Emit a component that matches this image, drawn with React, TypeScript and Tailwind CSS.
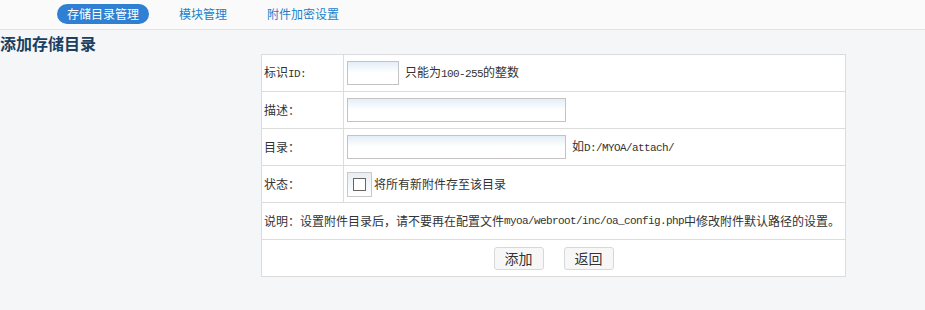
import React from 'react';

const CJK = '"Noto Sans CJK SC", "Noto Sans", sans-serif';

const Mono: React.FC<{ children: React.ReactNode }> = ({ children }) => (
    <span className="text-[11px] tracking-[-0.6px]" style={{ fontFamily: '"Liberation Mono", monospace' }}>{children}</span>
);

const TextInput: React.FC<{ width: string }> = ({ width }) => (
    <input
        type="text"
        className={`${width} h-[24px] border border-[#c3c3c3] bg-gradient-to-b from-[#e4eef7] via-white to-white text-[12px] px-1 outline-none`}
    />
);

const Row: React.FC<{ label: string | React.ReactNode; children: React.ReactNode }> = ({ label, children }) => (
    <div className="flex h-[37px] border-b border-[#dcdcdc]">
        <div className="w-[82px] border-r border-[#dcdcdc] flex items-center pl-[2px] text-[12px] text-[#333]">{label}</div>
        <div className="flex-1 flex items-center pl-[3px] text-[12px] text-[#333]">{children}</div>
    </div>
);

const App: React.FC = () => {
    const tabs = ['存储目录管理', '模块管理', '附件加密设置'];

    return (
        <div className="w-full h-[310px] bg-[#f5f6f8]" style={{ fontFamily: CJK }}>
            <div className="h-[30px] bg-[#fafafa] border-b border-[#e2e2e2] flex items-center pl-[57px] gap-[20px]">
                {tabs.map((t, i) => (
                    <span
                        key={t}
                        className={
                            i === 0
                                ? 'h-[20px] leading-[20px] px-[10px] rounded-full bg-[#2f7fd2] text-white text-[12px] -mt-[1px]'
                                : 'h-[20px] leading-[20px] px-[10px] text-[#1a7fcb] text-[12px] -mt-[1px]'
                        }
                    >
                        {t}
                    </span>
                ))}
            </div>

            <h1 className="mt-[2px] h-[22px] leading-[22px] text-[16px] font-bold text-[#1b3f60]">添加存储目录</h1>

            <div className="ml-[261px] w-[585px] bg-white border-t border-l border-r border-[#dcdcdc]">
                <Row label={<span>标识<Mono>ID:</Mono></span>}>
                    <TextInput width="w-[52px]" />
                    <span className="ml-[6px]">只能为<Mono>100-255</Mono>的整数</span>
                </Row>
                <Row label="描述：">
                    <TextInput width="w-[219px]" />
                </Row>
                <Row label="目录：">
                    <TextInput width="w-[219px]" />
                    <span className="ml-[6px]">如<Mono>D:/MYOA/attach/</Mono></span>
                </Row>
                <Row label="状态：">
                    <label className="flex items-center">
                        <span className="w-[25px] h-[25px] border border-[#c8c8c8] bg-gradient-to-b from-[#e8eef4] to-white flex items-center justify-center">
                            <span className="w-[13px] h-[13px] border border-[#666] bg-white" />
                        </span>
                        <span className="ml-[2px]">将所有新附件存至该目录</span>
                    </label>
                </Row>
                <div className="h-[37px] border-b border-[#dcdcdc] flex items-center pl-[2px] text-[12px] text-[#333] whitespace-nowrap">
                    说明：设置附件目录后，请不要再在配置文件<Mono>myoa/webroot/inc/oa_config.php</Mono>中修改附件默认路径的设置。
                </div>
                <div className="h-[37px] border-b border-[#dcdcdc] flex items-center justify-center gap-[20px]">
                    <button className="w-[50px] h-[23px] border border-[#d8d8d8] rounded-[3px] bg-[#f7f7f7] text-[14px] text-[#333]">添加</button>
                    <button className="w-[50px] h-[23px] border border-[#d8d8d8] rounded-[3px] bg-[#f7f7f7] text-[14px] text-[#333]">返回</button>
                </div>
            </div>
        </div>
    );
};

export default App;
